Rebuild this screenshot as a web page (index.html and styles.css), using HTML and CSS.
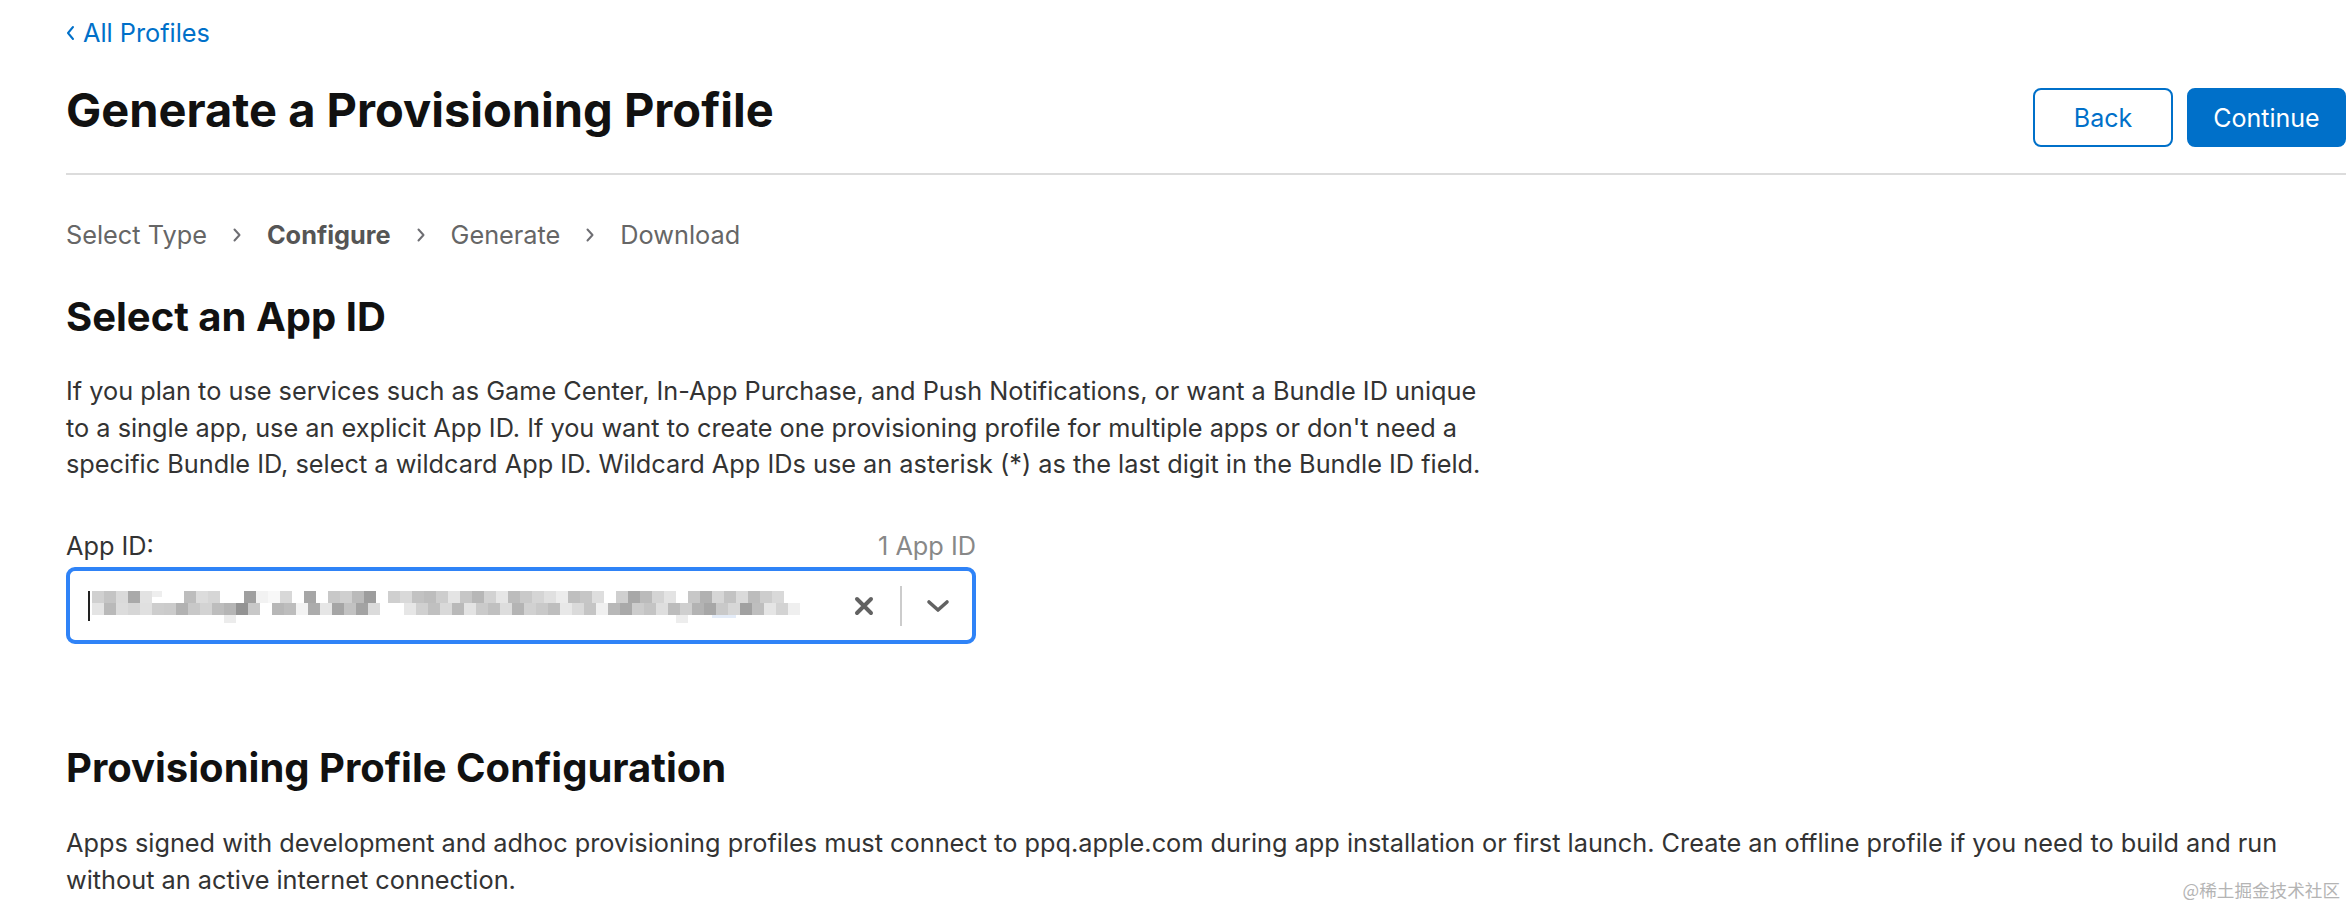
FILE: index.html
```html
<!DOCTYPE html>
<html lang="en">
<head>
<meta charset="utf-8">
<title>Generate a Provisioning Profile</title>
<link rel="stylesheet" href="styles.css">
</head>
<body>
<div class="page">
  <a class="back-link" href="#">
    <svg class="back-chev" width="9" height="16" viewBox="0 0 9 16"><path d="M7 2 L2 8 L7 14" fill="none" stroke="#0070c9" stroke-width="2" stroke-linecap="round" stroke-linejoin="round"/></svg>
    <span>All Profiles</span>
  </a>

  <div class="title-row">
    <h1>Generate a Provisioning Profile</h1>
    <div class="actions">
      <button class="btn btn-outline">Back</button>
      <button class="btn btn-primary">Continue</button>
    </div>
  </div>
  <div class="divider"></div>

  <nav class="steps">
    <span class="step">Select Type</span>
    <svg class="step-chev" width="10" height="16" viewBox="0 0 10 16"><path d="M2.5 2.5 L7.5 8 L2.5 13.5" fill="none" stroke="#6e6e73" stroke-width="2" stroke-linecap="round" stroke-linejoin="round"/></svg>
    <span class="step step-current">Configure</span>
    <svg class="step-chev" width="10" height="16" viewBox="0 0 10 16"><path d="M2.5 2.5 L7.5 8 L2.5 13.5" fill="none" stroke="#6e6e73" stroke-width="2" stroke-linecap="round" stroke-linejoin="round"/></svg>
    <span class="step">Generate</span>
    <svg class="step-chev" width="10" height="16" viewBox="0 0 10 16"><path d="M2.5 2.5 L7.5 8 L2.5 13.5" fill="none" stroke="#6e6e73" stroke-width="2" stroke-linecap="round" stroke-linejoin="round"/></svg>
    <span class="step">Download</span>
  </nav>

  <section class="section">
    <h2 class="heading">Select an App ID</h2>
    <p class="copy">If you plan to use services such as Game Center, In-App Purchase, and Push Notifications, or want a Bundle ID unique<br>to a single app, use an explicit App ID. If you want to create one provisioning profile for multiple apps or don't need a<br>specific Bundle ID, select a wildcard App ID. Wildcard App IDs use an asterisk (*) as the last digit in the Bundle ID field.</p>

    <div class="field">
      <div class="field-head">
        <span class="field-label">App ID:</span>
        <span class="field-count">1 App ID</span>
      </div>
      <div class="select">
        <div class="select-value">
          <span class="cursor"></span>
          <svg class="mosaic" width="720" height="36" viewBox="0 0 720 36">
            <g>
              <rect x="0" y="0" width="12" height="12" fill="#d0d0d0"/>
              <rect x="12" y="0" width="12" height="12" fill="#c4c4c4"/>
              <rect x="24" y="0" width="12" height="12" fill="#dadada"/>
              <rect x="36" y="0" width="12" height="12" fill="#a9a9a9"/>
              <rect x="48" y="0" width="12" height="12" fill="#e2e2e2"/>
              <rect x="60" y="0" width="10" height="6" fill="#eeeeee"/>
              <rect x="92" y="0" width="12" height="12" fill="#bdbdbd"/>
              <rect x="104" y="0" width="12" height="12" fill="#dcdcdc"/>
              <rect x="116" y="0" width="12" height="12" fill="#d6d6d6"/>
              <rect x="152" y="0" width="12" height="12" fill="#9f9f9f"/>
              <rect x="164" y="0" width="12" height="12" fill="#f2f2f2"/>
              <rect x="176" y="0" width="12" height="12" fill="#f8f8f8"/>
              <rect x="188" y="0" width="12" height="12" fill="#d8d8d8"/>
              <rect x="212" y="0" width="12" height="12" fill="#a6a6a6"/>
              <rect x="236" y="0" width="12" height="12" fill="#c8c8c8"/>
              <rect x="248" y="0" width="12" height="12" fill="#cfcfcf"/>
              <rect x="260" y="0" width="12" height="12" fill="#bababa"/>
              <rect x="272" y="0" width="12" height="12" fill="#9d9d9d"/>
              <rect x="296" y="0" width="12" height="12" fill="#cfcfcf"/>
              <rect x="308" y="0" width="12" height="12" fill="#d9d9d9"/>
              <rect x="320" y="0" width="12" height="12" fill="#c2c2c2"/>
              <rect x="332" y="0" width="12" height="12" fill="#bdbdbd"/>
              <rect x="344" y="0" width="12" height="12" fill="#cdcdcd"/>
              <rect x="356" y="0" width="12" height="12" fill="#e4e4e4"/>
              <rect x="368" y="0" width="12" height="12" fill="#c6c6c6"/>
              <rect x="380" y="0" width="12" height="12" fill="#b7b7b7"/>
              <rect x="392" y="0" width="12" height="12" fill="#d2d2d2"/>
              <rect x="404" y="0" width="12" height="12" fill="#e6e6e6"/>
              <rect x="416" y="0" width="12" height="12" fill="#bcbcbc"/>
              <rect x="428" y="0" width="12" height="12" fill="#c9c9c9"/>
              <rect x="440" y="0" width="12" height="12" fill="#d5d5d5"/>
              <rect x="452" y="0" width="12" height="12" fill="#e0e0e0"/>
              <rect x="464" y="0" width="12" height="12" fill="#ececec"/>
              <rect x="476" y="0" width="12" height="12" fill="#bfbfbf"/>
              <rect x="488" y="0" width="12" height="12" fill="#c6c6c6"/>
              <rect x="500" y="0" width="12" height="12" fill="#dedede"/>
              <rect x="524" y="0" width="12" height="12" fill="#cfcfcf"/>
              <rect x="536" y="0" width="12" height="12" fill="#a8a8a8"/>
              <rect x="548" y="0" width="12" height="12" fill="#bbbbbb"/>
              <rect x="560" y="0" width="12" height="12" fill="#d4d4d4"/>
              <rect x="572" y="0" width="12" height="12" fill="#e3e3e3"/>
              <rect x="596" y="0" width="12" height="12" fill="#c7c7c7"/>
              <rect x="608" y="0" width="12" height="12" fill="#b1b1b1"/>
              <rect x="620" y="0" width="12" height="12" fill="#d6d6d6"/>
              <rect x="632" y="0" width="12" height="12" fill="#c3c3c3"/>
              <rect x="644" y="0" width="12" height="12" fill="#dadada"/>
              <rect x="656" y="0" width="12" height="12" fill="#bcbcbc"/>
              <rect x="668" y="0" width="12" height="12" fill="#cdcdcd"/>
              <rect x="680" y="0" width="12" height="12" fill="#d9d9d9"/>
            </g>
            <g>
              <rect x="0" y="12" width="12" height="12" fill="#e4e4e4"/>
              <rect x="12" y="12" width="12" height="12" fill="#b9b9b9"/>
              <rect x="24" y="12" width="12" height="12" fill="#dcdcdc"/>
              <rect x="36" y="12" width="12" height="12" fill="#d6d6d6"/>
              <rect x="48" y="12" width="12" height="12" fill="#e0e0e0"/>
              <rect x="60" y="12" width="12" height="12" fill="#cdcdcd"/>
              <rect x="72" y="12" width="12" height="12" fill="#cbcbcb"/>
              <rect x="84" y="12" width="12" height="12" fill="#b2b2b2"/>
              <rect x="96" y="12" width="12" height="12" fill="#c8c8c8"/>
              <rect x="108" y="12" width="12" height="12" fill="#d3d3d3"/>
              <rect x="120" y="12" width="12" height="12" fill="#bdbdbd"/>
              <rect x="132" y="12" width="12" height="12" fill="#b5b5b5"/>
              <rect x="132" y="24" width="12" height="8" fill="#ececec"/>
              <rect x="144" y="12" width="12" height="12" fill="#939393"/>
              <rect x="156" y="12" width="12" height="12" fill="#c8c8c8"/>
              <rect x="180" y="12" width="12" height="12" fill="#b7b7b7"/>
              <rect x="192" y="12" width="12" height="12" fill="#bdbdbd"/>
              <rect x="204" y="12" width="12" height="12" fill="#f3f3f3"/>
              <rect x="216" y="12" width="12" height="12" fill="#acacac"/>
              <rect x="228" y="12" width="12" height="12" fill="#e6e6e6"/>
              <rect x="240" y="12" width="12" height="12" fill="#a5a5a5"/>
              <rect x="252" y="12" width="12" height="12" fill="#c2c2c2"/>
              <rect x="264" y="12" width="12" height="12" fill="#a3a3a3"/>
              <rect x="276" y="12" width="12" height="12" fill="#dbdbdb"/>
              <rect x="312" y="12" width="12" height="12" fill="#e6e6e6"/>
              <rect x="324" y="12" width="12" height="12" fill="#d0d0d0"/>
              <rect x="336" y="12" width="12" height="12" fill="#c0c0c0"/>
              <rect x="348" y="12" width="12" height="12" fill="#d9d9d9"/>
              <rect x="360" y="12" width="12" height="12" fill="#b9b9b9"/>
              <rect x="372" y="12" width="12" height="12" fill="#e3e3e3"/>
              <rect x="384" y="12" width="12" height="12" fill="#cacaca"/>
              <rect x="396" y="12" width="12" height="12" fill="#c0c0c0"/>
              <rect x="408" y="12" width="12" height="12" fill="#dddddd"/>
              <rect x="420" y="12" width="12" height="12" fill="#b4b4b4"/>
              <rect x="432" y="12" width="12" height="12" fill="#d1d1d1"/>
              <rect x="444" y="12" width="12" height="12" fill="#c9c9c9"/>
              <rect x="456" y="12" width="12" height="12" fill="#bebebe"/>
              <rect x="468" y="12" width="12" height="12" fill="#e8e8e8"/>
              <rect x="480" y="12" width="12" height="12" fill="#dadada"/>
              <rect x="492" y="12" width="12" height="12" fill="#c5c5c5"/>
              <rect x="504" y="12" width="12" height="12" fill="#f0f0f0"/>
              <rect x="516" y="12" width="12" height="12" fill="#b8b8b8"/>
              <rect x="528" y="12" width="12" height="12" fill="#a9a9a9"/>
              <rect x="540" y="12" width="12" height="12" fill="#cccccc"/>
              <rect x="552" y="12" width="12" height="12" fill="#c4c4c4"/>
              <rect x="564" y="12" width="12" height="12" fill="#dedede"/>
              <rect x="576" y="12" width="12" height="12" fill="#bcbcbc"/>
              <rect x="588" y="12" width="12" height="12" fill="#cfcfcf"/>
              <rect x="600" y="12" width="12" height="12" fill="#b3b3b3"/>
              <rect x="612" y="12" width="12" height="12" fill="#a7a7a7"/>
              <rect x="624" y="12" width="12" height="12" fill="#c9c9c9"/>
              <rect x="636" y="12" width="12" height="12" fill="#d7d7d7"/>
              <rect x="648" y="12" width="12" height="12" fill="#a1a1a1"/>
              <rect x="660" y="12" width="12" height="12" fill="#bebebe"/>
              <rect x="672" y="12" width="12" height="12" fill="#e5e5e5"/>
              <rect x="684" y="12" width="12" height="12" fill="#d3d3d3"/>
              <rect x="696" y="12" width="12" height="12" fill="#efefef"/>
              <rect x="584" y="24" width="12" height="8" fill="#ededed"/>
              <rect x="620" y="24" width="24" height="3" fill="#e4ecf8"/>
            </g>
          </svg>
        </div>
        <div class="select-indicators">
          <svg class="icon-clear" width="22" height="22" viewBox="0 0 22 22"><path d="M4 4 L18 18 M18 4 L4 18" stroke="#626262" stroke-width="4" stroke-linecap="round"/></svg>
          <span class="sep"></span>
          <svg class="icon-chevron" width="24" height="14" viewBox="0 0 24 14"><path d="M3 3 L12 11 L21 3" fill="none" stroke="#626262" stroke-width="3.6" stroke-linecap="round" stroke-linejoin="round"/></svg>
        </div>
      </div>
    </div>
  </section>

  <section class="section section-config">
    <h2 class="heading">Provisioning Profile Configuration</h2>
    <p class="copy">Apps signed with development and adhoc provisioning profiles must connect to ppq.apple.com during app installation or first launch. Create an offline profile if you need to build and run<br>without an active internet connection.</p>
  </section>
</div>
<div class="watermark">@稀土掘金技术社区</div>
</body>
</html>
```

FILE: styles.css
```css
* { box-sizing: border-box; }

html, body {
  margin: 0;
  background: #fff;
}

body {
  font-family: Inter, "Noto Sans", "Liberation Sans", sans-serif;
  color: #333;
  overflow: hidden;
  height: 908px;
  position: relative;
}

.page {
  padding: 18px 2px 0 66px;
}

.back-link {
  display: inline-flex;
  align-items: center;
  gap: 8px;
  font-size: 25.3px;
  line-height: 30px;
  color: #0070c9;
  text-decoration: none;
}

.back-chev { display: block; }

.title-row {
  display: flex;
  justify-content: space-between;
  align-items: flex-start;
  margin-top: 33px;
}

h1 {
  margin: 0;
  font-size: 47px;
  line-height: 57px;
  font-weight: 700;
  color: #111;
}

.actions {
  display: flex;
  gap: 14px;
  margin-top: 7px;
}

.btn {
  height: 59px;
  border-radius: 8px;
  font-family: inherit;
  font-size: 25px;
  border: 2px solid #0070c9;
  padding: 0;
  cursor: pointer;
}

.btn-outline {
  width: 140px;
  background: #fff;
  color: #0070c9;
}

.btn-primary {
  width: 159px;
  background: #0070c9;
  color: #fff;
}

.divider {
  height: 2px;
  background: #dcdcdc;
  margin-top: 26px;
}

.steps {
  display: flex;
  align-items: center;
  gap: 25px;
  margin-top: 42px;
  font-size: 25.3px;
  line-height: 36px;
  color: #666;
}

.step-current {
  font-weight: 700;
  color: #555;
}

.step-chev { display: block; }

.heading {
  margin: 0;
  font-size: 40px;
  line-height: 44px;
  font-weight: 700;
  color: #111;
}

.section {
  margin-top: 42px;
}

.copy {
  margin: 34px 0 0;
  font-size: 25.3px;
  line-height: 36.7px;
  color: #333;
  white-space: nowrap;
}

.field {
  width: 910px;
  margin-top: 48px;
}

.field-head {
  display: flex;
  justify-content: space-between;
  align-items: baseline;
  font-size: 25.3px;
  line-height: 30px;
}

.field-label { color: #333; }

.field-count { color: #888; }

.select {
  margin-top: 6px;
  height: 77px;
  border: 4px solid #2f83f7;
  border-radius: 9px;
  display: flex;
  align-items: center;
  padding-left: 18px;
}

.select-value {
  flex: 1;
  display: flex;
  align-items: center;
  gap: 2px;
}

.cursor {
  width: 2px;
  height: 30px;
  background: #222;
}

.mosaic { display: block; margin-top: 6px; }

.select-indicators {
  display: flex;
  align-items: center;
  height: 100%;
}

.icon-clear {
  display: block;
  margin-right: 25px;
}

.sep {
  width: 2px;
  height: 40px;
  background: #cccccc;
}

.icon-chevron {
  display: block;
  margin: 0 22px 0 24px;
}

.section-config {
  margin-top: 102px;
}

.section-config .copy {
  margin-top: 35px;
}

.watermark {
  position: absolute;
  right: 8px;
  bottom: 4px;
  font-family: "Noto Sans CJK SC", sans-serif;
  font-size: 17.6px;
  line-height: 28px;
  color: #b4b4b4;
}
```
